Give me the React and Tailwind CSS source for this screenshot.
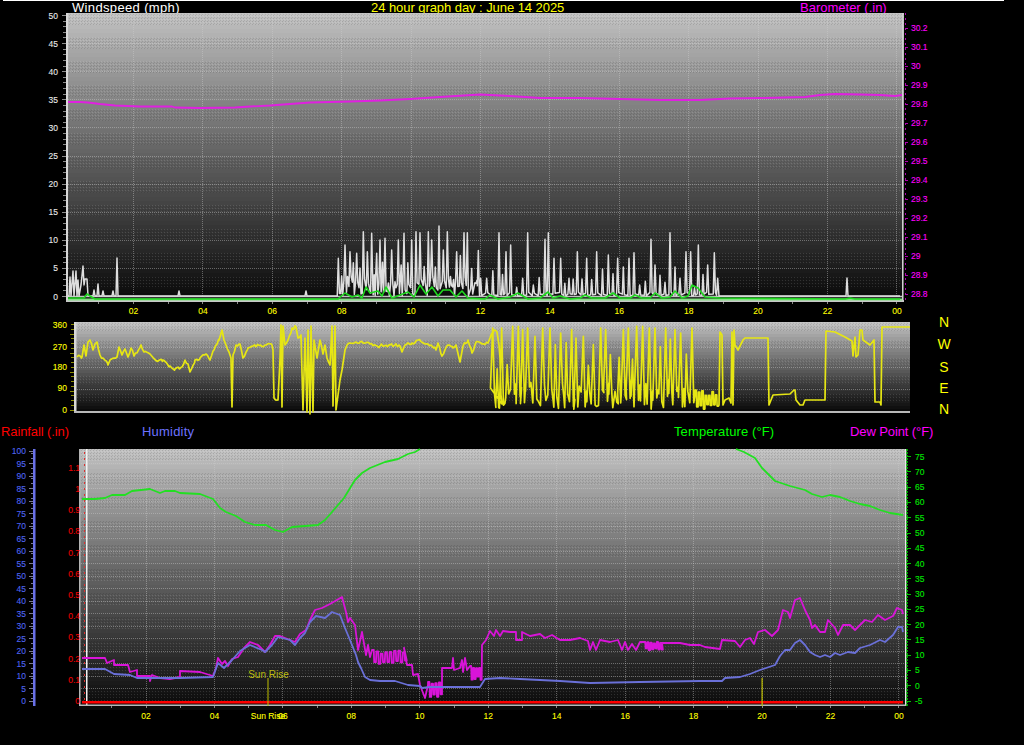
import React from 'react';

const YELLOW = '#ffff00';

const rng = (seed) => () => (seed = (seed * 16807) % 2147483647) / 2147483647;
const pts = (list) => list.map((p) => p.join(',')).join(' ');
const range = (a, b, step = 1) => {
  const out = [];
  for (let v = a; v <= b + 0.001; v += step) out.push(v);
  return out;
};

// square-ish zigzag between two y levels, for the noisy stretches
const zigzag = (x0, x1, yTop, yBottom, step, seed) => {
  const r = rng(seed);
  const out = [];
  for (let x = x0; x < x1; x += step) {
    const top = yTop + r() * (yBottom - yTop) * 0.3;
    const bottom = yBottom - r() * (yBottom - yTop) * 0.3;
    out.push([x, top], [x + step * 0.4, top], [x + step * 0.5, bottom], [x + step * 0.9, bottom]);
  }
  return out;
};

// adds small wobble along the flatter parts of a hand traced line
const roughen = (list, amp, seed) => {
  const r = rng(seed);
  const out = [];
  list.forEach((p, i) => {
    out.push(p);
    const next = list[i + 1];
    if (!next) return;
    const dx = next[0] - p[0];
    if (dx < 3 || Math.abs(next[1] - p[1]) > 15) return;
    for (let k = 1.5; k < dx; k += 1.5) {
      const t = k / dx;
      out.push([p[0] + k, p[1] + (next[1] - p[1]) * t + (r() - 0.5) * amp]);
    }
  });
  return out;
};

/* ---------- wind speed data ---------- */
const gustPeaks = [[25,115],[45,75],[60,95],[80,100],[100,35],[112,95],[125,40],[140,100],[150,60],[165,55],[185,90],[205,60],[222,40],[245,60],[258,35],[270,38],[295,35],[305,60],[327,18],[340,90],[352,35],[380,95],[402,38],[412,38],[438,190],[452,175],[470,175],[507,38],[528,95],[542,75],[578,175],[593,38],[610,195],[645,58],[655,38],[672,115],[692,115],[717,175],[742,95],[770,115],[800,95],[835,105],[863,115],[897,115],[912,98],[963,58],[975,135],[1020,38],[1050,175],[1068,95],[1082,95],[1105,75],[1133,135],[1153,98],[1163,175]];

const windLine = (() => {
  const r = rng(77);
  const out = [[68, 296],[69,296],[70,277],[71,296],[73,271],[74,296],[76,271],[77,296],[78,280],[79,296],[81,285],[83,266],[84,285],[85,279],[87,279],[88,296],[93,296],[94,290],[95,296],[97,296],[98,284],[99,296],[102,296],[103,291],[104,296],[112,296],[113,291],[114,296],[116,296],[117,258],[118,296],[178,296],[179,291],[180,296],[305,296],[306,291],[307,296],[336,296]];
  gustPeaks.forEach(([zx, zy], i) => {
    const x = 330 + zx / 3;
    const y = 220 + zy / 3;
    const dense = x < 480;
    out.push([x - 1.1, 296 - r() * (dense ? 18 : 4)]);
    out.push([x, y]);
    const next = gustPeaks[i + 1];
    if (next) {
      const nx = 330 + next[0] / 3;
      out.push([x + 1.1, 296 - r() * (dense ? 20 : 4)]);
      const gap = nx - x;
      const extra = Math.floor(gap / (dense ? 4.5 : 7));
      for (let k = 1; k <= extra; k++) {
        const mid = x + (gap * k) / (extra + 1);
        out.push([mid - 1, 296 - r() * (dense ? 14 : 2)]);
        out.push([mid, 296 - 8 - r() * (dense ? 38 : 22)]);
        out.push([mid + 1, 296 - r() * (dense ? 14 : 2)]);
      }
    }
  });
  out.push([719, 296],[846, 296],[847, 278],[848, 296],[900, 296]);
  return out;
})();

const gustLine = [[68,298],[84,298],[87,294],[90,296],[95,299],[338,299],[345,293],[352,297],[358,295],[362,298],[366,287],[370,293],[378,291],[382,296],[386,287],[392,298],[400,295],[408,292],[414,297],[420,285],[426,294],[432,287],[438,296],[443,290],[450,290],[456,297],[462,291],[468,298],[485,299],[490,295],[498,299],[510,297],[518,293],[528,299],[540,298],[548,292],[553,298],[560,296],[570,299],[580,298],[585,295],[592,298],[605,298],[613,293],[620,298],[630,298],[635,295],[642,298],[650,298],[655,293],[662,298],[670,297],[675,291],[682,298],[688,296],[692,285],[698,288],[705,297],[720,298],[845,299],[850,298],[855,299],[900,299]];

const baroLine = [[68,102],[80,102],[88,102.5],[100,104],[115,105.5],[140,106.5],[172,106.5],[175,107.5],[200,108],[235,107.5],[250,106.5],[270,105.5],[290,104],[310,102.5],[330,102],[350,101.5],[380,100.5],[410,99],[440,97],[480,94.5],[510,96],[540,98],[580,98],[620,99],[660,100],[700,100],[730,98.5],[765,98],[805,97],[820,95],[835,94],[860,94.5],[880,95],[895,96],[902,95]];

/* ---------- wind direction data ---------- */
const dirSpikes = [[8,30],[35,30],[68,25],[85,25],[98,35],[113,30],[135,55],[158,30],[180,30],[212,45],[245,35],[258,60],[280,55],[310,80],[332,30],[347,35],[375,220],[400,35],[415,30],[440,25],[458,25],[478,30],[495,30],[527,30],[555,35],[572,45],[606,30]];

const dirTraced = [[77,357],[82,357],[84,345],[86,356],[88,342],[90,340],[93,350],[95,344],[97,342],[100,355],[103,358],[108,365],[110,360],[114,358],[117,357],[119,347],[122,355],[125,349],[128,357],[131,348],[134,356],[137,353],[141,345],[144,352],[150,354],[158,361],[163,360],[170,366],[175,369],[182,367],[185,360],[188,364],[190,372],[195,360],[200,358],[206,354],[210,360],[214,350],[219,340],[222,330],[224,340],[226,345],[229,352],[231,358],[232,407],[233,355],[236,345],[240,344],[243,358],[248,348],[253,346],[265,345],[272,345],[273,350],[274,398],[278,400],[280,360],[281,325],[282,407],[283,326],[285,345],[288,340],[292,328],[296,327],[298,338],[301,335],[303,410],[305,338],[307,412],[308,330],[310,414],[311,326],[313,412],[314,340],[317,358],[320,340],[323,354],[325,345],[327,358],[330,365],[332,326],[333,406],[335,326],[336,410],[338,395],[340,380],[342,370],[345,350],[347,345],[350,343],[360,342],[370,344],[380,346],[390,345],[400,346],[402,352],[405,345],[412,343],[418,340],[425,344],[432,346],[436,350],[438,343],[442,356],[448,345],[453,348],[456,345],[460,362],[463,346],[468,340],[472,353],[476,342],[482,344],[488,343],[490,338],[494,330],[497,332],[499,345],[500,358],[501,395],[502,404]];

const dirLine = (() => {
  const r = rng(41);
  const out = roughen(dirTraced, 3.5, 9);
  dirSpikes.forEach(([zx, zy], i) => {
    const x = 490 + zx / 3;
    out.push([x - 2.2, 318 + (210 + r() * 65) / 3]);
    out.push([x, 318 + zy / 3]);
    out.push([x + 1.8, 318 + (195 + r() * 80) / 3]);
    out.push([x + 3.2, 318 + (180 + r() * 90) / 3]);
    const next = dirSpikes[i + 1];
    if (next && next[0] - zx > 24) {
      const mid = x + (next[0] - zx) / 6;
      out.push([mid - 1.5, 318 + (225 + r() * 45) / 3]);
      out.push([mid, 318 + (60 + r() * 110) / 3]);
      out.push([mid + 1.5, 318 + (210 + r() * 60) / 3]);
    }
  });
  out.push(...zigzag(695, 718, 390, 410, 3.4, 19));
  out.push([719,405],[720,332],[722,335],[723,405],[725,400],[729,398],[731,403],[732,332],[733,405],[734,330],[735,345],[738,350],[743,340],[745,338],[768,338],[769,405],[773,395],[790,394],[794,390],[795,390],[796,400],[800,405],[803,405],[805,400],[825,400],[826,331],[835,332],[845,337],[852,341],[853,356],[855,337],[856,357],[858,355],[860,330],[862,330],[863,340],[870,345],[874,340],[875,402],[880,402],[881,405],[882,327],[910,327]);
  return out;
})();

/* ---------- bottom chart data ---------- */
const tempLeft = [[82,499],[95,499],[105,498],[112,495],[125,495],[132,491],[150,489],[160,493],[165,491],[175,491],[180,493],[200,494],[213,499],[220,508],[226,512],[236,516],[245,522],[255,525],[266,525],[275,530],[283,532],[292,527],[305,526],[318,525],[325,520],[332,512],[338,505],[344,498],[355,480],[362,473],[370,468],[385,462],[398,459],[408,454],[415,452],[420,449]];
const tempRight = [[736,449],[744,452],[755,458],[762,468],[775,481],[790,486],[805,490],[812,494],[822,497],[830,495],[840,497],[850,501],[860,504],[870,506],[880,510],[890,513],[903,515]];

const dewLine = [[82,658],[105,658],[107,663],[114,660],[114,665],[128,665],[130,672],[137,670],[137,676],[150,676],[150,681],[152,675],[160,678],[170,679],[180,677],[180,671],[200,672],[213,676],[216,668],[218,658],[222,664],[225,661],[228,666],[232,659],[238,657],[244,648],[250,642],[258,645],[265,652],[270,645],[275,636],[280,636],[290,640],[295,642],[300,634],[306,630],[310,620],[315,610],[322,608],[330,604],[342,597],[346,612],[348,622],[350,618],[355,625],[358,650],[362,632],[366,655],[368,645],[370,657],
  ...zigzag(372, 404, 650, 664, 4.4, 11),
  [404,648],[407,665],[412,665],[413,675],[418,674],[420,685],[425,698],[428,685],
  ...zigzag(428, 442, 682, 697, 3.6, 23),
  [442,668],[452,668],[453,658],[454,670],[460,668],[462,660],[463,672],[465,658],[467,670],
  ...zigzag(470, 482, 666, 680, 3, 31),
  [482,645],[486,640],[490,631],[494,636],[496,630],[500,636],[503,631],[510,632],[516,632],[516,640],[522,640],[522,632],[530,636],[540,634],[545,638],[552,635],[560,640],[570,640],[580,638],[588,641],[590,650],[593,642],[596,650],[600,640],[610,642],[618,640],[622,650],[625,642],[628,650],[632,644],[636,650],[640,642],
  ...zigzag(644, 662, 642, 651, 3.2, 53),
  [662,643],[680,643],[690,645],[700,645],[705,647],[720,649],[722,640],[735,641],[740,647],[745,640],[750,638],[754,644],[758,632],[765,630],[772,636],[778,630],[783,610],[788,612],[790,618],[795,600],[800,598],[805,610],[810,620],[812,628],[815,625],[820,632],[825,632],[828,620],[835,628],[838,635],[843,625],[850,625],[855,630],[865,620],[872,622],[878,615],[885,620],[893,616],[897,608],[902,610],[903,614]];

const humidityLine = [[82,669],[105,669],[114,674],[130,675],[137,678],[180,678],[213,677],[218,663],[224,668],[232,660],[240,651],[250,645],[262,650],[265,652],[272,645],[278,637],[290,640],[295,645],[300,638],[305,633],[310,622],[316,616],[325,618],[332,612],[340,615],[345,628],[350,640],[356,655],[358,662],[361,668],[365,677],[370,680],[380,681],[395,681],[408,685],[420,686],[422,688],[430,687],[440,687],[468,687],[480,687],[485,679],[500,678],[520,679],[540,680],[560,681],[590,683],[640,682],[700,681],[722,681],[725,678],[740,677],[750,674],[760,670],[775,665],[780,656],[785,650],[790,650],[795,643],[800,640],[805,645],[810,652],[815,655],[820,657],[825,655],[830,657],[835,653],[840,655],[848,652],[855,653],[860,648],[870,645],[880,640],[885,642],[893,635],[898,627],[902,627],[903,632]];

/* ---------- shared svg parts ---------- */
const Dither = () => (
  <defs>
    <pattern id="dither" width="3" height="3" patternUnits="userSpaceOnUse">
      <rect x="0" y="0" width="1" height="1" fill="#000" opacity="0.12" />
      <rect x="2" y="1" width="1" height="1" fill="#fff" opacity="0.12" />
      <rect x="1" y="2" width="1" height="1" fill="#000" opacity="0.1" />
    </pattern>
  </defs>
);

// fine grey steps, with the dither laid over every other group of them
const Bands = ({ x, y, w, h, band, group = 3 }) => {
  const count = Math.ceil(h / band);
  return (
    <g shapeRendering="crispEdges">
      {range(0, count - 1).map((i) => {
        const g = Math.round(194 - Math.pow(i / (count - 1), 0.92) * 184);
        return (
          <React.Fragment key={i}>
            <rect x={x} y={y + i * band} width={w} height={band + 0.5} fill={`rgb(${g},${g},${g})`} />
            {Math.floor(i / group) % 2 === 0 && <rect x={x} y={y + i * band} width={w} height={band} fill="url(#dither)" />}
          </React.Fragment>
        );
      })}
    </g>
  );
};

const Grid = ({ xs = [], ys = [], x0, x1, y0, y1 }) => (
  <g stroke="#d0d0d0" strokeOpacity="0.42" strokeDasharray="1 1" shapeRendering="crispEdges">
    {xs.map((x) => <line key={x} x1={x} x2={x} y1={y0} y2={y1} />)}
    {ys.map((y) => <line key={y} x1={x0} x2={x1} y1={y} y2={y} />)}
  </g>
);

const Line = ({ data, color, width = 1.8 }) => (
  <polyline points={pts(data)} fill="none" stroke={color} strokeWidth={width} strokeLinejoin="round" />
);

const TickLabels = ({ items, x, color, anchor = 'end' }) => (
  <g fill={color} stroke={color} strokeWidth="0.1" textAnchor={anchor}>
    {items.map(([label, y]) => <text key={label} x={x} y={y + 3}>{label}</text>)}
  </g>
);

const HOURS = ['02','04','06','08','10','12','14','16','18','20','22','00'];

/* ---------- charts ---------- */
const WindChart = () => {
  const hx = (i) => 133.5 + i * 69.4;
  const yAt = (v) => 296.5 - v * 5.62;
  return (
    <svg width="1024" height="303" viewBox="0 13 1024 303" className="block text-[8.5px]">
      <Dither />
      <Bands x={66} y={13} w={838} h={288} band={4} />
      <Grid xs={HOURS.map((_, i) => hx(i))} ys={range(5, 50, 5).map(yAt)} x0={68} x1={902} y0={13} y1={296} />
      <rect x="66" y="13" width="2" height="288" fill="#d8d8d8" />
      <rect x="902" y="13" width="1.5" height="288" fill="#cfcfcf" />
      <rect x="66" y="300" width="838" height="2" fill="#c8c8c8" />
      <g stroke="#8a8a8a" shapeRendering="crispEdges">
        {range(0, 50).map((v) => <line key={v} x1={v % 5 === 0 ? 62 : 63} x2="66" y1={yAt(v)} y2={yAt(v)} />)}
        {range(0, 23).map((i) => <line key={i} x1={98.8 + i * 34.7} x2={98.8 + i * 34.7} y1="302" y2="304" />)}
      </g>
      <TickLabels x={58} color="#e8e8e8" items={range(0, 50, 5).map((v) => [v, yAt(v)])} />
      <g stroke="#b000b0" strokeDasharray="2 3" shapeRendering="crispEdges">
        <line x1="905" x2="905" y1="13" y2="301" />
      </g>
      <g stroke="#b000b0" shapeRendering="crispEdges">
        {range(0, 14).map((i) => <line key={i} x1="905" x2="908" y1={294 - i * 19} y2={294 - i * 19} />)}
      </g>
      <TickLabels
        x={911}
        anchor="start"
        color="#ff00ff"
        items={['28.8','28.9','29','29.1','29.2','29.3','29.4','29.5','29.6','29.7','29.8','29.9','30','30.1','30.2'].map((l, i) => [l, 294 - i * 19])}
      />
      <g fill={YELLOW} stroke={YELLOW} strokeWidth="0.1" textAnchor="middle">
        {HOURS.map((h, i) => <text key={h} x={hx(i)} y={314}>{h}</text>)}
      </g>
      <Line data={baroLine} color="#e020e0" />
      <line x1="68" x2="902" y1="296.5" y2="296.5" stroke="#c0c0c0" strokeWidth="1.5" />
      <Line data={windLine} color="#dedede" width={1.5} />
      <line x1="68" x2="902" y1="299.5" y2="299.5" stroke="#86e086" strokeWidth="2" />
      <Line data={gustLine} color="#1fd81f" width={1.6} />
    </svg>
  );
};

const DirectionChart = () => (
  <svg width="1024" height="100" viewBox="0 316 1024 100" className="block overflow-visible text-[8.5px]">
    <Bands x={74} y={322} w={836} h={90} band={3} group={3} />
    <Grid ys={[347, 367, 389]} x0={77} x1={910} />
    <rect x="74" y="322" width="2.5" height="91" fill="#d8d8d8" />
    <rect x="74" y="411" width="836" height="2" fill="#b8b8b8" />
    <g stroke="#8c8c00" shapeRendering="crispEdges">
      {range(0, 18).map((i) => <line key={i} x1={i % 4 === 0 ? 70 : 71} x2="74" y1={410 - i * 4.75} y2={410 - i * 4.75} />)}
    </g>
    <TickLabels x={67} color={YELLOW} items={[[360, 325], [270, 346.5], [180, 367], [90, 388], [0, 410]]} />
    <Line data={dirLine} color="#e6e614" width={1.7} />
    <g fill={YELLOW} textAnchor="middle" className="text-[14px]">
      {[['N', 322], ['W', 344], ['S', 367], ['E', 388], ['N', 409]].map(([l, y], i) => (
        <text key={i} x={944} y={y + 5}>{l}</text>
      ))}
    </g>
  </svg>
);

const ClimateChart = () => {
  const hx = (i) => 146 + i * 68.45;
  const humY = (v) => 701 - v * 2.5;
  const rainLabels = ['0','0.1','0.2','0.3','0.4','0.5','0.6','0.7','0.8','0.9','1','1.1'];
  return (
    <svg width="1024" height="298" viewBox="0 447 1024 298" className="block text-[8.5px]">
      <Bands x={79} y={449} w={826} h={257} band={4} />
      <Grid xs={HOURS.map((_, i) => hx(i))} ys={range(5, 95, 5).map(humY)} x0={81} x1={904} y0={449} y1={704} />
      <rect x="79" y="449" width="1.5" height="257" fill="#b4b4b4" />
      <rect x="86" y="449" width="1.5" height="256" fill="#f2f2f2" />
      <rect x="905" y="449" width="1.5" height="257" fill="#e8e8e8" />
      <rect x="79" y="704.5" width="827" height="1.5" fill="#b8b8b8" />

      {/* humidity axis */}
      <rect x="33" y="449" width="2.5" height="257" fill="#6870e8" />
      <g stroke="#7a7a90" shapeRendering="crispEdges">
        {range(0, 100, 5).map((v) => <line key={v} x1="29" x2="33" y1={humY(v)} y2={humY(v)} />)}
        {range(0, 49).map((v) => <line key={v} x1="31" x2="33" y1={humY(v * 2 + 1)} y2={humY(v * 2 + 1)} />)}
      </g>
      <TickLabels x={26} color="#4f66f2" items={range(0, 100, 5).map((v) => [v, humY(v)])} />

      {/* rain axis */}
      <g stroke="#e03030" strokeDasharray="2 4" shapeRendering="crispEdges">
        <line x1="84.5" x2="84.5" y1="452" y2="704" strokeWidth="1.5" />
      </g>
      <TickLabels x={80} color="#f00000" items={rainLabels.map((l, i) => [l, 701 - i * 21.2])} />

      {/* temperature axis */}
      <line x1="907" x2="907" y1="449" y2="706" stroke="#00d000" strokeDasharray="2 1" strokeWidth="1.5" />
      <g stroke="#00c000" shapeRendering="crispEdges">
        {range(0, 16).map((i) => <line key={i} x1="907" x2="911" y1={701 - i * 15.27} y2={701 - i * 15.27} />)}
      </g>
      <TickLabels
        x={915}
        anchor="start"
        color="#00e800"
        items={range(-5, 75, 5).map((v) => [v, 701 - ((v + 5) / 5) * 15.27])}
      />

      <Line data={tempLeft} color="#22e022" />
      <Line data={tempRight} color="#22e022" />
      <Line data={dewLine} color="#d814d8" />
      <Line data={humidityLine} color="#6a70d8" />
      <rect x="82" y="701" width="821" height="2.5" fill="#ff0000" />

      {/* sun rise and sun set */}
      <rect x="267.5" y="678" width="1" height="28" fill="#c0c000" />
      <rect x="761.5" y="678" width="1.2" height="28" fill="#c0c000" />
      <text x="268.5" y="678" fill="#bcbc10" textAnchor="middle" className="text-[10px]">Sun Rise</text>
      <g stroke="#888" shapeRendering="crispEdges">
        {range(0, 23).map((i) => <line key={i} x1={111.8 + i * 34.225} x2={111.8 + i * 34.225} y1="706" y2="708" />)}
      </g>
      <g fill={YELLOW} stroke={YELLOW} strokeWidth="0.1" textAnchor="middle">
        {HOURS.map((h, i) => <text key={h} x={hx(i)} y={719}>{h}</text>)}
        <text x={268} y={719}>Sun Rise</text>
      </g>
    </svg>
  );
};

export default function App() {
  return (
    <div className="w-[1024px] h-[745px] overflow-hidden bg-black flex flex-col font-['Liberation_Sans',sans-serif]">
      <div className="h-px w-[1001px] ml-[3px] bg-white" />

      <div className="h-[12px] pl-[72px] flex text-[13px] leading-[13px] whitespace-nowrap">
        <span className="w-[299px] text-white tracking-[0.35px]">Windspeed (mph)</span>
        <span className="w-[429px] text-[#ffff00] tracking-[-0.06px]">24 hour graph day : June 14 2025</span>
        <span className="text-[#ff00ff]">Barometer (.in)</span>
      </div>

      <WindChart />
      <DirectionChart />

      <div className="h-[31px] pl-px pt-[8px] flex text-[13px] leading-[15px] whitespace-nowrap">
        <span className="w-[141px] text-[#ff0000] tracking-[-0.1px]">Rainfall (.in)</span>
        <span className="w-[532px] text-[#6c72ff] tracking-[0.2px]">Humidity</span>
        <span className="w-[176px] text-[#00ff00] tracking-[0.12px]">Temperature (°F)</span>
        <span className="text-[#ff00ff] tracking-[-0.1px]">Dew Point (°F)</span>
      </div>

      <ClimateChart />
    </div>
  );
}
